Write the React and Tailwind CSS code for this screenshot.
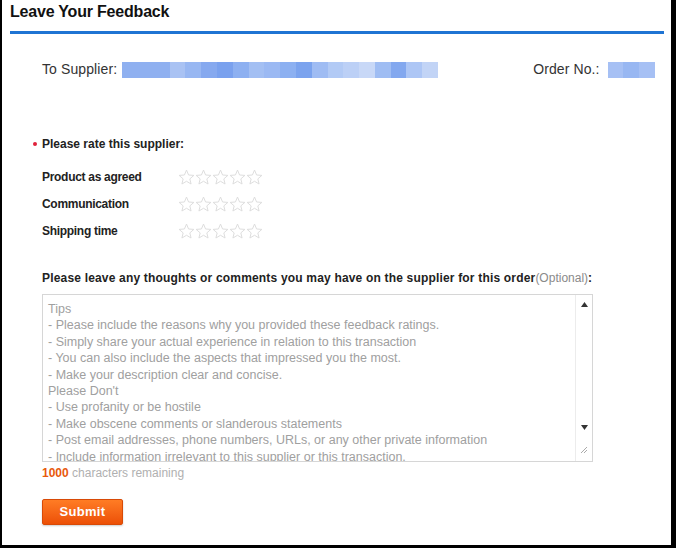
import React from "react";

const supplierCells = [
  "#8fb0f0", "#8fb0f0", "#8fb0f0", "#a9c2f3", "#98b7f2", "#86a9ef", "#7aa1ee", "#8db0f1",
  "#a3bff3", "#9bb9f3", "#8cb0f1", "#7ba3ee", "#9fbcf3", "#b2caf5", "#bcd0f6", "#c8d8f7",
  "#9fbdf3", "#83a8ef", "#adc6f5", "#c2d4f6",
];
const orderCells = ["#a6c0f4", "#98b7f2", "#a6c0f4"];

const tips = [
  "Tips",
  "- Please include the reasons why you provided these feedback ratings.",
  "- Simply share your actual experience in relation to this transaction",
  "- You can also include the aspects that impressed you the most.",
  "- Make your description clear and concise.",
  "Please Don't",
  "- Use profanity or be hostile",
  "- Make obscene comments or slanderous statements",
  "- Post email addresses, phone numbers, URLs, or any other private information",
  "- Include information irrelevant to this supplier or this transaction.",
];

const Star = () => (
  <svg width="17" height="16" viewBox="0 0 24 23" className="shrink-0">
    <polygon
      points="12,1.5 15,8.6 22.6,9.2 16.8,14.2 18.6,21.6 12,17.6 5.4,21.6 7.2,14.2 1.4,9.2 9,8.6"
      fill="none"
      stroke="#dcdcdc"
      strokeWidth="1.4"
      strokeLinejoin="round"
    />
  </svg>
);

const RatingRow = ({ label }) => (
  <div className="flex items-center h-[27px]">
    <span className="w-[136px] text-[12px] font-bold text-[#222] tracking-[-0.3px]">{label}</span>
    <div className="flex">
      {[0, 1, 2, 3, 4].map((i) => (
        <Star key={i} />
      ))}
    </div>
  </div>
);

const App = () => {
  return (
    <div
      className="w-[676px] h-[548px] bg-black pl-[2px] pr-[5px] pb-[3px]"
      style={{ fontFamily: '"Liberation Sans", Arial, sans-serif' }}
    >
      <div className="h-full bg-white flex flex-col">
        {/* Header */}
        <div className="pl-[8px] pr-[7px]">
          <h1 className="text-[16px] font-bold text-[#111] leading-[20px] pt-[2px] tracking-[-0.2px]">
            Leave Your Feedback
          </h1>
          <div className="mt-[9px] h-[3px] bg-[#1f74d3]" />
        </div>

        {/* Supplier / order */}
        <div className="flex items-center mt-[27px] pl-[40px] h-[17px]">
          <span className="text-[14px] tracking-[0.1px] text-[#333] mr-[5px]">To Supplier:</span>
          <div className="flex h-[16px] w-[316px]">
            {supplierCells.map((c, i) => (
              <div key={i} className="flex-1" style={{ backgroundColor: c }} />
            ))}
          </div>
          <span className="ml-[95px] text-[14px] tracking-[0.1px] text-[#333] mr-[8px]">Order No.:</span>
          <div className="flex h-[16px] w-[47px]">
            {orderCells.map((c, i) => (
              <div key={i} className="flex-1" style={{ backgroundColor: c }} />
            ))}
          </div>
        </div>

        {/* Rating */}
        <div className="mt-[57px] pl-[31px] flex items-center">
          <span className="w-[4px] h-[4px] rounded-full bg-[#e0223a] mr-[5px]" />
          <span className="text-[12px] font-bold text-[#222]">Please rate this supplier:</span>
        </div>
        <div className="pl-[40px] mt-[10px]">
          <RatingRow label="Product as agreed" />
          <RatingRow label="Communication" />
          <RatingRow label="Shipping time" />
        </div>

        {/* Comments */}
        <div className="pl-[40px] mt-[26px]">
          <p className="text-[12px] font-bold text-[#222] leading-[16px] tracking-[0.18px]">
            Please leave any thoughts or comments you may have on the supplier for this order
            <span className="font-normal text-[#8a8a8a] tracking-normal">(Optional)</span>:
          </p>
          <div className="mt-[8px] w-[551px] h-[168px] border border-[#d6d6d6] flex">
            <div className="flex-1 overflow-hidden pl-[5px] pt-[6px] text-[12.5px] leading-[16.4px] text-[#a0a0a0] whitespace-pre">
              {tips.join("\n")}
            </div>
            <div className="w-[17px] border-l border-[#ececec] flex flex-col items-center justify-between py-[7px]">
              <svg width="7" height="5" viewBox="0 0 7 5">
                <polygon points="3.5,0 7,5 0,5" fill="#333" />
              </svg>
              <div className="flex flex-col items-center gap-[16px]">
                <svg width="7" height="5" viewBox="0 0 7 5">
                  <polygon points="0,0 7,0 3.5,5" fill="#333" />
                </svg>
                <svg width="8" height="8" viewBox="0 0 8 8">
                  <line x1="1" y1="7" x2="7" y2="1" stroke="#aaa" strokeWidth="1" />
                  <line x1="4" y1="7" x2="7" y2="4" stroke="#aaa" strokeWidth="1" />
                </svg>
              </div>
            </div>
          </div>
          <p className="mt-[3px] text-[12px] leading-[16px] text-[#b0b0b0]">
            <span className="font-bold text-[#e8590c]">1000</span> characters remaining
          </p>
          <button className="mt-[18px] w-[81px] h-[26px] rounded-[2px] border border-[#d84a06] bg-gradient-to-b from-[#ff7c24] to-[#ec4f05] text-white text-[13px] font-bold tracking-[0.3px] shadow-[0_1px_2px_rgba(0,0,0,0.2)]">
            Submit
          </button>
        </div>
      </div>
    </div>
  );
};

export default App;
